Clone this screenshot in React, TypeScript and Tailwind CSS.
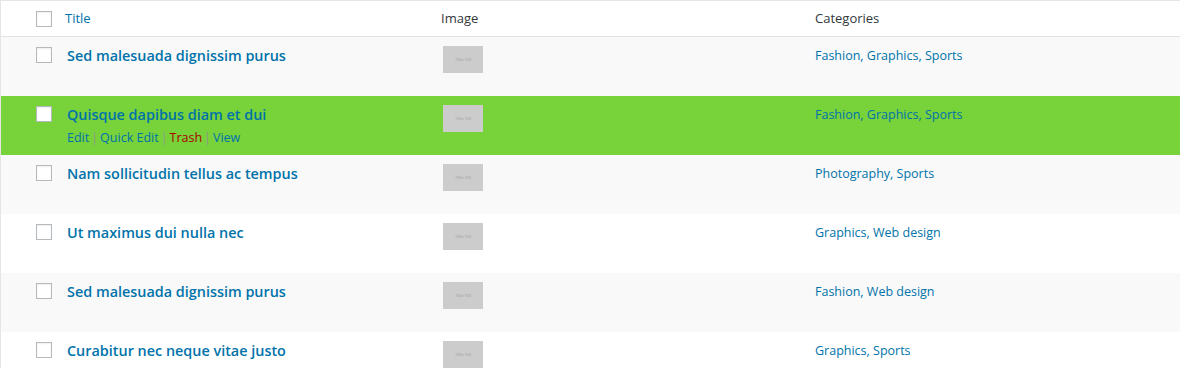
import React from "react";

type Post = { title: string; cats: string[]; hover?: boolean };

const posts: Post[] = [
  { title: "Sed malesuada dignissim purus", cats: ["Fashion", "Graphics", "Sports"] },
  { title: "Quisque dapibus diam et dui", cats: ["Fashion", "Graphics", "Sports"], hover: true },
  { title: "Nam sollicitudin tellus ac tempus", cats: ["Photography", "Sports"] },
  { title: "Ut maximus dui nulla nec", cats: ["Graphics", "Web design"] },
  { title: "Sed malesuada dignissim purus", cats: ["Fashion", "Web design"] },
  { title: "Curabitur nec neque vitae justo", cats: ["Graphics", "Sports"] },
];

function Checkbox() {
  return <span className="block w-4 h-4 border border-[#b4b9be] bg-white shadow-[inset_0_1px_2px_rgba(0,0,0,0.07)]" />;
}

function Sep() {
  return <span className="text-[#8f9a8a] px-[2px]">|</span>;
}

export default function App() {
  return (
    <div className="w-[1180px] h-[368px] overflow-hidden bg-white font-['Open_Sans',sans-serif] text-[12.5px]">
      <div className="border-t border-l border-[#e5e5e5]">
        <div className="grid grid-cols-[56px_376px_374px_1fr] h-9 items-center border-b border-[#e1e1e1] text-[13px] text-[#32373c]">
          <div className="flex justify-end pr-[5px]">
            <Checkbox />
          </div>
          <div className="pl-2 text-[#0073aa]">Title</div>
          <div className="pl-2">Image</div>
          <div className="pl-2">Categories</div>
        </div>
        {posts.map((p, i) => (
          <div
            key={i}
            className={`grid grid-cols-[56px_376px_374px_1fr] h-[59px] items-start ${
              p.hover ? "bg-[#78d23a]" : i % 2 === 0 ? "bg-[#f9f9f9]" : "bg-white"
            }`}
          >
            <div className="flex justify-end pr-[5px] pt-[10px]">
              <Checkbox />
            </div>
            <div className="pl-[10px] pt-[9px]">
              <div className="text-[14.4px] font-semibold text-[#0073aa] leading-[20px]">{p.title}</div>
              {p.hover && (
                <div className="mt-[3px] leading-[20px] text-[#0073aa]">
                  <span>Edit</span>
                  <Sep />
                  <span>Quick Edit</span>
                  <Sep />
                  <span className="text-[#aa0000]">Trash</span>
                  <Sep />
                  <span>View</span>
                </div>
              )}
            </div>
            <div className="pl-[10px] pt-[9px]">
              <div className="w-10 h-[27px] bg-[#cccccc] flex items-center justify-center text-[4px] text-[#999]">150×150</div>
            </div>
            <div className="pl-2 pt-[9px] leading-[20px] text-[#0073aa]">{p.cats.join(", ")}</div>
          </div>
        ))}
      </div>
    </div>
  );
}
